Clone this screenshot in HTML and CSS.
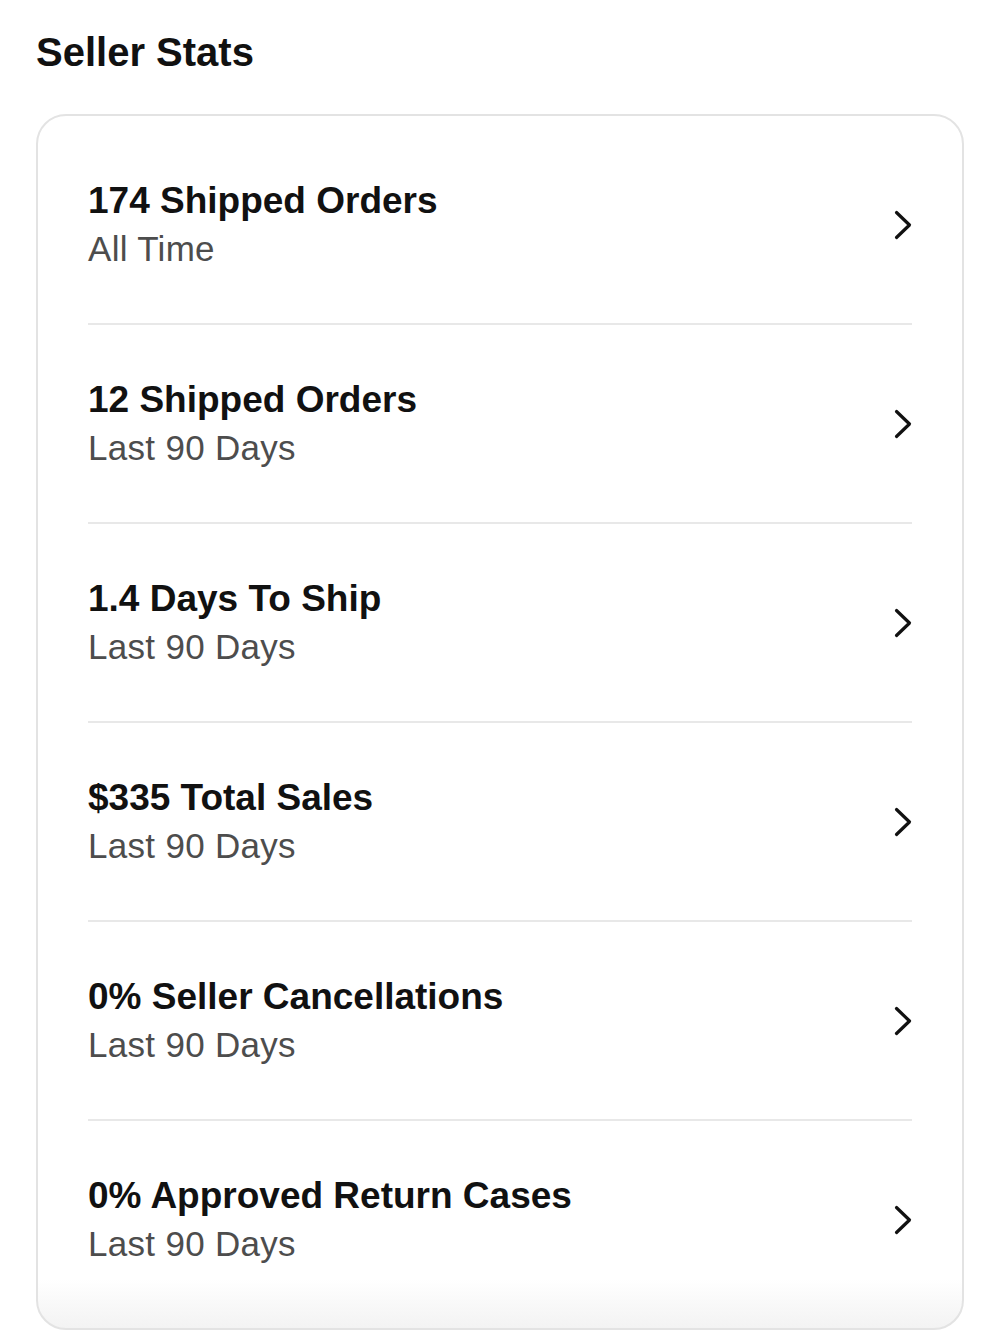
FILE: index.html
```html
<!DOCTYPE html>
<html lang="en">

<head>
    <meta charset="UTF-8">
    <meta name="viewport" content="width=device-width, initial-scale=1.0">
    <title>Seller Stats</title>
    <link rel="stylesheet" href="styles.css">
</head>

<body>
    <div class="page">
        <h2 class="title">Seller Stats</h2>
        <div class="card">
            <a class="row" href="#">
                <div class="text">
                    <div class="main">174 Shipped Orders</div>
                    <div class="sub">All Time</div>
                </div>
                <svg class="chev" viewBox="0 0 18 30"><polyline points="2.5,2.5 15.5,15 2.5,27.5" /></svg>
            </a>
            <a class="row" href="#">
                <div class="text">
                    <div class="main">12 Shipped Orders</div>
                    <div class="sub">Last 90 Days</div>
                </div>
                <svg class="chev" viewBox="0 0 18 30"><polyline points="2.5,2.5 15.5,15 2.5,27.5" /></svg>
            </a>
            <a class="row" href="#">
                <div class="text">
                    <div class="main">1.4 Days To Ship</div>
                    <div class="sub">Last 90 Days</div>
                </div>
                <svg class="chev" viewBox="0 0 18 30"><polyline points="2.5,2.5 15.5,15 2.5,27.5" /></svg>
            </a>
            <a class="row" href="#">
                <div class="text">
                    <div class="main">$335 Total Sales</div>
                    <div class="sub">Last 90 Days</div>
                </div>
                <svg class="chev" viewBox="0 0 18 30"><polyline points="2.5,2.5 15.5,15 2.5,27.5" /></svg>
            </a>
            <a class="row" href="#">
                <div class="text">
                    <div class="main">0% Seller Cancellations</div>
                    <div class="sub">Last 90 Days</div>
                </div>
                <svg class="chev" viewBox="0 0 18 30"><polyline points="2.5,2.5 15.5,15 2.5,27.5" /></svg>
            </a>
            <a class="row" href="#">
                <div class="text">
                    <div class="main">0% Approved Return Cases</div>
                    <div class="sub">Last 90 Days</div>
                </div>
                <svg class="chev" viewBox="0 0 18 30"><polyline points="2.5,2.5 15.5,15 2.5,27.5" /></svg>
            </a>
        </div>
    </div>
</body>

</html>
```

FILE: styles.css
```css
* {
    box-sizing: border-box;
}

body {
    margin: 0;
    padding: 0;
    background: #fff;
    font-family: "Liberation Sans", Arial, sans-serif;
    color: #111;
}

.page {
    padding: 22px 36px 0 36px;
}

.title {
    margin: 0 0 32px 0;
    font-size: 40px;
    line-height: 60px;
    font-weight: bold;
    color: #111;
}

.card {
    border: 2px solid #e3e3e3;
    border-radius: 30px;
    padding: 10px 50px;
    background: linear-gradient(to bottom, #fff 0, #fff 96%, #f3f3f3 100%);
}

.row {
    display: flex;
    align-items: center;
    justify-content: space-between;
    height: 199px;
    border-bottom: 2px solid #e8e8e8;
    text-decoration: none;
    color: inherit;
}

.row:last-child {
    height: 197px;
    border-bottom: none;
}

.main {
    font-size: 37px;
    line-height: 48px;
    font-weight: bold;
    color: #111;
}

.sub {
    font-size: 35px;
    line-height: 48px;
    letter-spacing: 0.3px;
    color: #4d4d4d;
}

.chev {
    width: 18px;
    height: 30px;
    fill: none;
    stroke: #111;
    stroke-width: 3.2;
    stroke-linecap: round;
    stroke-linejoin: round;
}
```
